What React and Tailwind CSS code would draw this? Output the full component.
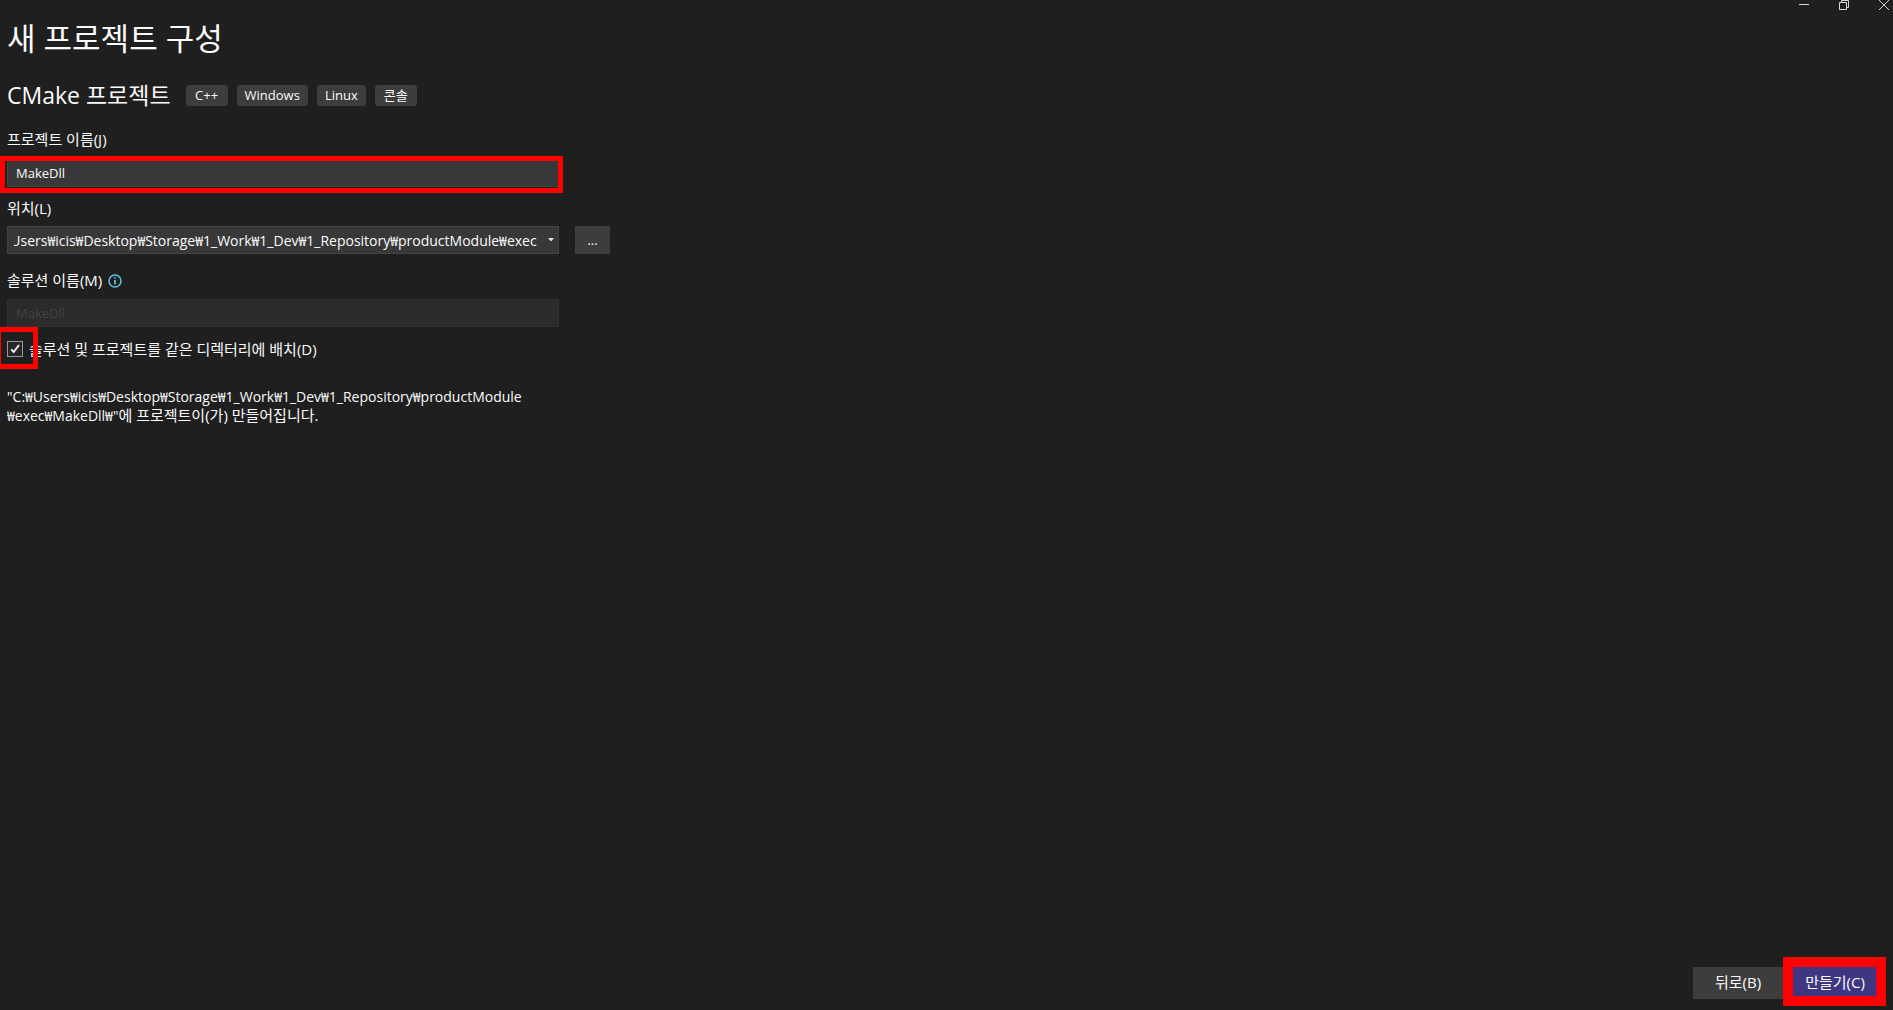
import React, { useEffect, useRef, useState } from 'react';

const LOCATION = 'C:₩Users₩icis₩Desktop₩Storage₩1_Work₩1_Dev₩1_Repository₩productModule₩exec';
const tags = ['C++', 'Windows', 'Linux', '콘솔'];

function WindowControls() {
    return (
        <div className="flex justify-end gap-5 h-3 text-[#d6d6d6]">
            <button aria-label="최소화" className="w-5 flex justify-end">
                <svg width="12" height="11" viewBox="0 0 12 11" fill="none" stroke="currentColor"><path d="M1 4.5h10" /></svg>
            </button>
            <button aria-label="이전 크기로 복원" className="w-5 flex justify-end">
                <svg width="12" height="11" viewBox="0 0 12 11" fill="none" stroke="currentColor">
                    <path d="M1.500 2.500h7v7h-7zM3.500 2.500v-2h7v7h-2" />
                </svg>
            </button>
            <button aria-label="닫기" className="w-5 mr-[3px] flex justify-end">
                <svg width="12" height="11" viewBox="0 0 12 11" fill="none" stroke="currentColor"><path d="M1 0l10 10M11 0L1 10" /></svg>
            </button>
        </div>
    );
}

function InfoIcon() {
    return (
        <svg width="14" height="14" viewBox="0 0 14 14" fill="none" stroke="#5fc3e4" className="shrink-0 mt-[2px]">
            <circle cx="7" cy="7" r="6" strokeWidth="1.5" />
            <path d="M7 6v4.500M7 3.300v1.500" strokeWidth="1.700" />
        </svg>
    );
}

export default function App() {
    const [name, setName] = useState('MakeDll');
    const [location, setLocation] = useState(LOCATION);
    const [sameDir, setSameDir] = useState(true);
    const locationRef = useRef(null);

    // keep the end of a long path in view
    useEffect(() => {
        const el = locationRef.current;
        el.scrollLeft = el.scrollWidth;
    }, [location]);

    return (
        <div className="min-h-screen flex flex-col bg-[#1f1f1f] text-[#fafafa] text-[15px] leading-5 font-['Open_Sans','Noto_Sans_CJK_KR',sans-serif]">
            <WindowControls />

            <main className="flex-1 px-[7px] pt-2">
                <h1 className="text-[31px] leading-9">새 프로젝트 구성</h1>

                <div className="flex items-center gap-[9px] mt-[23px]">
                    <h2 className="text-[23px] leading-8 mr-[6px]">CMake 프로젝트</h2>
                    {tags.map(tag => (
                        <span key={tag} className="h-[21px] min-w-[42px] px-2 rounded-[3px] bg-[#3d3d3d] text-[13px] leading-5 text-center">{tag}</span>
                    ))}
                </div>

                <form className="max-w-[603px]">
                    <label htmlFor="name" className="block mt-[18px]">프로젝트 이름(J)</label>
                    <div className="relative mt-[10px] mr-[51px]">
                        <input
                            id="name"
                            value={name}
                            onChange={(e) => setName(e.target.value)}
                            className="block w-full h-7 px-2 pb-px bg-[#383838] border border-[#434343] text-[13px] outline-none"
                        />
                        <div className="absolute -left-[7px] -right-1 -top-[3px] -bottom-[6px] border-5 border-[#ff0000] pointer-events-none" />
                    </div>

                    <label htmlFor="location" className="block mt-[11px]">위치(L)</label>
                    <div className="flex gap-4 mt-2">
                        <div className="flex flex-1 min-w-0 h-7 bg-[#383838] border border-[#434343]">
                            <input
                                id="location"
                                ref={locationRef}
                                value={location}
                                onChange={(e) => setLocation(e.target.value)}
                                className="flex-1 min-w-0 mx-[6px] pt-px text-[14px] outline-none"
                            />
                            <button type="button" aria-label="위치 목록" className="w-[15px] flex items-center justify-center">
                                <svg width="6" height="4" viewBox="0 0 6 4" fill="#e0e0e0"><path d="M0 0h6L3 3.500z" /></svg>
                            </button>
                        </div>
                        <button type="button" className="w-[35px] h-7 bg-[#3d3d3d] text-[13px]">...</button>
                    </div>

                    <div className="flex items-center gap-[6px] mt-4">
                        <label htmlFor="solution">솔루션 이름(M)</label>
                        <InfoIcon />
                    </div>
                    <div className="mt-[9px] mr-[51px]">
                        <input
                            id="solution"
                            value={name}
                            disabled
                            className="block w-full h-7 px-2 bg-[#2b2b2b] border border-[#303030] text-[13px] text-[#434343]"
                        />
                    </div>

                    <div className="flex items-center mt-3">
                        <div className="relative w-4 h-4">
                            <input
                                id="samedir"
                                type="checkbox"
                                checked={sameDir}
                                onChange={(e) => setSameDir(e.target.checked)}
                                className="peer block appearance-none w-4 h-4 border border-[#999999] bg-[#262626]"
                            />
                            <svg width="16" height="16" viewBox="0 0 16 16" fill="none" stroke="#f0f0f0" strokeWidth="2" className="absolute inset-0 hidden peer-checked:block pointer-events-none">
                                <path d="M4.300 8.300l2.400 2.700L12 4" />
                            </svg>
                            <div className="absolute -left-[11px] -top-[14px] w-[42px] h-[42px] border-5 border-[#ff0000] pointer-events-none z-10" />
                        </div>
                        <label htmlFor="samedir" className="ml-[6px]">솔루션 및 프로젝트를 같은 디렉터리에 배치(D)</label>
                    </div>

                    <p className="mt-7 text-[14px] leading-[19px]">
                        "C:₩Users₩icis₩Desktop₩Storage₩1_Work₩1_Dev₩1_Repository₩productModule<br />
                        ₩exec₩MakeDll₩"<span className="text-[15px]">에 프로젝트이(가) 만들어집니다.</span>
                    </p>
                </form>
            </main>

            <footer className="flex justify-end gap-[10px] pr-[10px] pb-[11px]">
                <button className="w-[90px] h-8 pb-[2px] bg-[#3d3d3d]">뒤로(B)</button>
                <div className="relative">
                    <button className="w-[90px] h-8 pr-[6px] pb-[2px] bg-[#3f3682]">만들기(C)</button>
                    <div className="absolute -left-[10px] -right-[3px] -top-[10px] -bottom-[7px] border-10 border-[#ff0000] pointer-events-none" />
                </div>
            </footer>
        </div>
    );
}
